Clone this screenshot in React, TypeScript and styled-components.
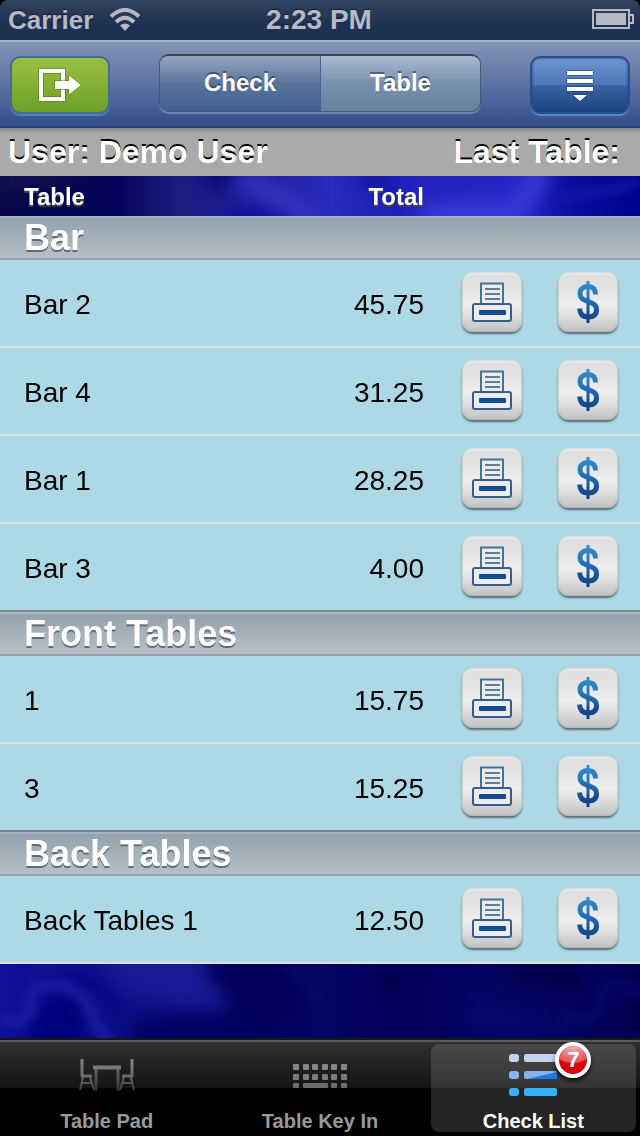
import React from "react";
import styled, { createGlobalStyle, css } from "styled-components";

const Global = createGlobalStyle`
  *, *::before, *::after { box-sizing: border-box; }
  html, body, #root { height: 100%; }
  body { margin: 0; background: #000; font-family: "Liberation Sans", Arial, sans-serif; color: #000; }
  button { font: inherit; border: 0; padding: 0; cursor: pointer; }
`;

const Screen = styled.div`
  min-height: 100%;
  display: flex;
  flex-direction: column;
  border-radius: 8px 8px 0 0;
  overflow: hidden;
`;

const StatusBar = styled.header`
  height: 40px;
  padding: 0 6px 0 8px;
  display: grid;
  grid-template-columns: 1fr auto 1fr;
  align-items: center;
  background: linear-gradient(#34415f, #1f3153 60%, #1e3052);
  color: #b4bac6;
  font-size: 26px;
  line-height: 40px;
  font-weight: bold;
  text-shadow: 0 -1px 1px rgba(0, 0, 0, 0.5);
`;

const Carrier = styled.div`
  display: flex;
  align-items: center;
  gap: 16px;
`;

const Clock = styled.time`
  padding-right: 4px;
  font-size: 28px;
`;

const Battery = styled.svg`
  justify-self: end;
`;

const NavBar = styled.nav`
  height: 88px;
  padding: 14px 10px 12px;
  display: grid;
  grid-template-columns: 1fr 322px 1fr;
  align-items: start;
  background: linear-gradient(#8494b8, #5d72a3 50%, #34508a 98%);
  border-top: 2px solid #a7b3cc;
  border-bottom: 2px solid #2b4069;
`;

const NavButton = styled.button<{ $kind: "exit" | "menu" }>`
  width: 100px;
  height: 58px;
  border-radius: 10px;
  display: grid;
  place-items: center;
  ${(p) =>
    p.$kind === "exit"
      ? css`
          background: linear-gradient(#9bbf3f, #84b033 50%, #6ca02a) padding-box;
          border: 2px solid #44699b;
          box-shadow: 0 2px 0 #4f83bd;
        `
      : css`
          justify-self: end;
          background: linear-gradient(#6f97d4, #4c76b8 50%, #3964a8 51%, #1c427f) padding-box;
          border: 2px solid #29508c;
          box-shadow: 0 2px 0 #5488c0, inset 0 0 3px #1d3f7a;
        `}
`;

const Segments = styled.div`
  height: 58px;
  margin-top: -2px;
  display: grid;
  grid-template-columns: 1fr 1fr;
  border: 1px solid #45587c;
  border-top: 2px solid #3b4455;
  border-radius: 10px;
  overflow: hidden;
  box-shadow: 0 2px 0 rgba(150, 170, 205, 0.55);
`;

const Segment = styled.button<{ $active?: boolean }>`
  padding-bottom: 2px;
  color: #fff;
  font-size: 24px;
  line-height: 28px;
  font-weight: bold;
  text-shadow: 0 -2px 0 rgba(40, 55, 80, 0.65);
  background: ${(p) =>
    p.$active
      ? "linear-gradient(#acbad0, #7890ad 50%, #67819f)"
      : "linear-gradient(#96a6c2, #58749c 50%, #406290)"};
  border-left: ${(p) => (p.$active ? "1px solid #46648f" : "0")};
`;

const UserBar = styled.div`
  height: 48px;
  padding: 0 20px 0 8px;
  display: flex;
  justify-content: space-between;
  background: linear-gradient(#898989, #aaa 6px);
  color: #fff;
  font-size: 32px;
  line-height: 48px;
  font-weight: bold;
  text-shadow: 0 -2px 0 #000;
`;

const Content = styled.main`
  flex: 1;
  position: relative;
  background: #000068;
  padding-bottom: 74px;
`;

const Backdrop = styled.svg`
  position: absolute;
  inset: 0;
  width: 100%;
  height: 100%;
`;

const Checks = styled.table`
  position: relative;
  width: 100%;
  table-layout: fixed;
  border-collapse: separate;
  border-spacing: 0;
`;

const ColumnHead = styled.th<{ $right?: boolean }>`
  height: 40px;
  padding: 2px 20px 0 24px;
  color: #fff;
  font-size: 24px;
  line-height: 28px;
  text-align: ${(p) => (p.$right ? "right" : "left")};
  text-shadow: 0 2px 0 #444;
`;

const SectionHead = styled.th`
  height: 44px;
  padding: 0 24px;
  text-align: left;
  color: #fff;
  font-size: 36px;
  line-height: 40px;
  text-shadow: 0 2px 0 #666b70;
  background: linear-gradient(#93a2ad, #b6bfc8);
  border-top: 2px solid #a9b5be;
  border-bottom: 2px solid #95a0ab;
`;

type CellKind = "name" | "total" | "print" | "pay";

const cellPadding: Record<CellKind, string> = {
  name: "4px 0 0 24px",
  total: "4px 20px 0 0",
  print: "0 0 2px",
  pay: "0 4px 2px 0",
};

const cellAlign: Record<CellKind, string> = {
  name: "left",
  total: "right",
  print: "center",
  pay: "center",
};

const Cell = styled.td<{ $kind: CellKind; $last?: boolean }>`
  height: 88px;
  padding: ${(p) => cellPadding[p.$kind]};
  text-align: ${(p) => cellAlign[p.$kind]};
  vertical-align: middle;
  font-size: 28px;
  line-height: 32px;
  background: #add8e6;
  border-bottom: 2px solid ${(p) => (p.$last ? "#7b8790" : "#e0e0e0")};
`;

const KeyButton = styled.button`
  display: inline-grid;
  place-items: center;
  width: 60px;
  height: 60px;
  vertical-align: middle;
  border-radius: 11px;
  background: linear-gradient(#dedede, #e4e4e4 30%, #efefef 55%, #dcdcdc 75%, #c2c2c2);
  box-shadow: inset 0 0 2px #999, inset 0 2px 2px #f5f5f5, 0 2px 2px rgba(50, 65, 75, 0.7);
`;

const TabBar = styled.footer`
  height: 98px;
  padding: 2px 4px 4px;
  display: grid;
  grid-template-columns: repeat(3, 1fr);
  column-gap: 8px;
  border-top: 2px solid #161616;
  background: linear-gradient(#5a5a5a 2px, #303030 2px, #131313 48px, #000 48px);
`;

const Tab = styled.button<{ $active?: boolean }>`
  margin-top: 2px;
  display: flex;
  flex-direction: column;
  align-items: center;
  justify-content: space-between;
  border-radius: 8px;
  color: ${(p) => (p.$active ? "#fff" : "#999")};
  background: ${(p) =>
    p.$active ? "linear-gradient(#484848, #353535 44px, #242424 44px)" : "transparent"};
  font-size: 20px;
  line-height: 22px;
  font-weight: bold;
`;

const TabIcon = styled.span`
  position: relative;
  height: 62px;
  display: grid;
  place-items: center;
`;

const Badge = styled.span`
  position: absolute;
  top: -2px;
  left: 46px;
  width: 36px;
  height: 36px;
  border: 4px solid #fff;
  border-radius: 50%;
  background: radial-gradient(ellipse 22px 18px at 50% 0, #f4b0b4, #e5545b 90%, #d9000d) padding-box;
  box-shadow: 0 3px 4px rgba(0, 0, 0, 0.7);
  color: #fff;
  font-size: 22px;
  line-height: 28px;
  text-align: center;
`;

const ExitIcon = () => (
  <svg width="44" height="36" viewBox="0 0 44 36" aria-hidden="true">
    <g fill="#fff" stroke="#4d7423" strokeWidth="1" paintOrder="stroke">
      <path fillRule="evenodd" d="M1 2H27V34H1ZM5 6V30H23V6Z" />
      <path d="M17 14H31V8.5L43 18L31 27.500V22H17Z" />
    </g>
  </svg>
);

const MenuIcon = () => (
  <svg width="30" height="34" viewBox="0 0 30 34" aria-hidden="true">
    <path
      d="M2 3H28V7H2ZM2 11H28V15H2ZM2 19H28V23H2ZM8 27H22L15 33Z"
      fill="#fff"
      stroke="#1b3767"
      strokeWidth="1"
      paintOrder="stroke"
    />
  </svg>
);

const PrinterIcon = () => (
  <svg width="40" height="40" viewBox="0 0 40 40" aria-hidden="true">
    <path d="M9 22V1.500H31V22" fill="#ececec" stroke="#3f7598" strokeWidth="2" />
    <path d="M13 7H28M13 12H28M13 17H28" stroke="#5c7d9a" strokeWidth="2" />
    <rect x="1" y="22" width="38" height="17" rx="2" fill="#ececec" stroke="#355c8e" strokeWidth="2" />
    <rect x="7" y="28" width="27" height="5" rx="1" fill="#164a90" />
  </svg>
);

const DollarIcon = () => (
  <svg width="24" height="44" viewBox="0 0 24 44" aria-hidden="true">
    <defs>
      <linearGradient id="dollarInk" gradientUnits="userSpaceOnUse" x1="0" y1="0" x2="0" y2="44">
        <stop offset="0" stopColor="#3390cf" />
        <stop offset="0.4" stopColor="#2775b8" />
        <stop offset="0.75" stopColor="#174d96" />
        <stop offset="1" stopColor="#123d80" />
      </linearGradient>
    </defs>
    <g fill="none" stroke="url(#dollarInk)">
      <path
        d="M19.500 14.500C19.500 9 16.500 6.500 12 6.500C7 6.500 4 9 4 13.500C4 18.500 7.500 19.500 12 21.500C17 23.500 20.500 24.500 20.500 29.500C20.500 35 17 37 12 37C7 37 4 34.500 3.500 28.500"
        strokeWidth="5"
      />
      <path d="M12.010 1L12 43" strokeWidth="3" />
    </g>
  </svg>
);

const TableIcon = () => (
  <svg width="56" height="32" viewBox="0 0 56 32" aria-hidden="true">
    <defs>
      <linearGradient id="chairInk" gradientUnits="userSpaceOnUse" x1="0" y1="0" x2="0" y2="32">
        <stop offset="0" stopColor="#858585" />
        <stop offset="0.6" stopColor="#666" />
        <stop offset="1" stopColor="#3c3c3c" />
      </linearGradient>
    </defs>
    <g fill="none" stroke="url(#chairInk)" strokeWidth="2">
      <path d="M3 0L3.010 18M53 0L53.010 18" strokeWidth="3" />
      <path d="M3 17L13 17.010M43 17L53 17.010" strokeWidth="3" />
      <path d="M4 18L1 31M11 18L15 31M3 24H13M52 18L55 31M45 18L41 31M43 24H53" />
      <path d="M14 8.500L42 8.510" strokeWidth="4" />
      <path d="M17 10L17.010 32M39 10L39.010 32" strokeWidth="3" opacity="0.75" />
    </g>
  </svg>
);

const KeyboardIcon = () => (
  <svg width="54" height="28" viewBox="0 -3 54 28" aria-hidden="true">
    <g fill="#858585">
      {[0, 10, 19, 29, 38, 48].map((x) => (
        <g key={x}>
          <rect x={x} y="0" width="6" height="6" rx="1" />
          <rect x={x} y="10" width="6" height="6" rx="1" fill="#7a7a7a" />
        </g>
      ))}
      <g fill="#6c6c6c">
        <rect x="0" y="19" width="6" height="5" rx="1" />
        <rect x="10" y="19" width="25" height="5" rx="1" />
        <rect x="38" y="19" width="6" height="5" rx="1" />
        <rect x="48" y="19" width="6" height="5" rx="1" />
      </g>
    </g>
  </svg>
);

const ListIcon = () => (
  <svg width="48" height="42" viewBox="0 0 48 42" aria-hidden="true">
    <g fill="#c5d3f2">
      <rect width="10" height="8" rx="3" />
      <rect x="15" width="33" height="8" rx="2" />
    </g>
    <g fill="#83b5ea">
      <rect y="17" width="10" height="8" rx="3" />
      <rect x="15" y="17" width="33" height="8" rx="2" />
      <path d="M18 25L48 18V23Q48 25 46 25Z" fill="#1c79ea" />
    </g>
    <g fill="#35b0f8">
      <rect y="34" width="10" height="8" rx="3" />
      <rect x="15" y="34" width="33" height="8" rx="2" />
    </g>
  </svg>
);

const sections = [
  { name: "Bar", rows: [["Bar 2", "45.75"], ["Bar 4", "31.25"], ["Bar 1", "28.25"], ["Bar 3", "4.00"]] },
  { name: "Front Tables", rows: [["1", "15.75"], ["3", "15.25"]] },
  { name: "Back Tables", rows: [["Back Tables 1", "12.50"]] },
];

const Silk = () => (
  <Backdrop viewBox="0 0 640 862" preserveAspectRatio="none" aria-hidden="true">
    <defs>
      <linearGradient id="silkTop">
        <stop offset="0" stopColor="#070748" />
        <stop offset="0.18" stopColor="#04045a" />
        <stop offset="0.28" stopColor="#1c1c80" />
        <stop offset="0.4" stopColor="#1d1d9c" />
        <stop offset="0.52" stopColor="#2a2abf" />
        <stop offset="0.6" stopColor="#2020b8" />
        <stop offset="0.8" stopColor="#2626c6" />
        <stop offset="0.9" stopColor="#0c0ca0" />
        <stop offset="1" stopColor="#000090" />
      </linearGradient>
      <linearGradient id="silkBottom">
        <stop offset="0" stopColor="#101098" />
        <stop offset="0.25" stopColor="#0c0c84" />
        <stop offset="0.4" stopColor="#00005c" />
        <stop offset="0.5" stopColor="#060664" />
        <stop offset="0.62" stopColor="#00005a" />
        <stop offset="0.8" stopColor="#050562" />
        <stop offset="1" stopColor="#000052" />
      </linearGradient>
      <filter id="soft" x="-20%" y="-60%" width="140%" height="220%" colorInterpolationFilters="sRGB">
        <feGaussianBlur stdDeviation="9" />
      </filter>
      <filter id="fine" x="-20%" y="-60%" width="140%" height="220%" colorInterpolationFilters="sRGB">
        <feGaussianBlur stdDeviation="4" />
      </filter>
    </defs>
    <rect width="640" height="60" fill="url(#silkTop)" />
    <rect y="740" width="640" height="122" fill="url(#silkBottom)" />
    <g filter="url(#soft)">
      <path d="M0 -10H110L0 20Z" fill="#13134e" />
      <path d="M200 -14H236L226 14H210Z" fill="#080872" />
      <path d="M236 -4Q280 0 330 50H290Q270 20 236 14Z" fill="#3434c0" />
      <path d="M220 46Q240 20 290 40V60H220Z" fill="#1010a0" />
      <path d="M350 -14H390V10L370 18Z" fill="#1414a4" />
      <path d="M420 30Q480 20 510 30L530 -10H556L520 50H420Z" fill="#3a3ad8" />
      <path d="M560 -12H640V8L560 14Z" fill="#0a0a98" />
      <path d="M90 770H200Q210 810 240 830Q160 836 120 812Z" fill="#1a1a96" />
      <path d="M40 830Q60 812 80 822L86 880H20Z" fill="#00007a" />
      <path d="M130 846Q190 836 260 850V880H140Z" fill="#000060" />
      <path d="M200 790H280Q310 830 300 840H240Z" fill="#000058" />
      <path d="M500 770H580V812Q530 812 506 800Z" fill="#00004c" />
      <path d="M470 800Q480 830 600 846L560 860H460Z" fill="#06066c" />
    </g>
    <g filter="url(#fine)" fill="none">
      <path d="M0 846Q36 846 30 828Q28 806 60 810Q90 818 94 846L112 870" stroke="#2222a6" strokeWidth="10" opacity="0.7" />
      <path d="M64 798Q100 806 116 830" stroke="#000072" strokeWidth="5" opacity="0.6" />
      <path d="M284 786Q304 796 320 830" stroke="#0c0c70" strokeWidth="7" opacity="0.7" />
      <path d="M384 780V812L420 790" stroke="#00004c" strokeWidth="6" />
      <path d="M560 840Q606 848 600 824Q594 804 640 814" stroke="#0a0a74" strokeWidth="8" opacity="0.7" />
      <path d="M560 22Q600 18 644 6" stroke="#2424b8" strokeWidth="5" opacity="0.6" />
    </g>
  </Backdrop>
);

export default function App() {
  return (
    <>
      <Global />
      <Screen>
        <StatusBar>
          <Carrier>
            <span>Carrier</span>
            <svg width="32" height="24" viewBox="0 0 32 24" aria-label="Wi-Fi">
              <g fill="none" stroke="#b4bac6" strokeWidth="4">
                <path d="M2 8.500Q16 -4.500 30 8.500" />
                <path d="M7 14Q16 5.500 25 14" />
              </g>
              <path d="M11 17.500Q16 13.500 21 17.500L16 23Z" fill="#b4bac6" />
            </svg>
          </Carrier>
          <Clock>2:23 PM</Clock>
          <Battery width="42" height="22" viewBox="0 0 42 22" aria-label="Battery full">
            <path d="M1 1H37V19H1ZM38 6H41V14H38" fill="none" stroke="#b4bac6" strokeWidth="2" />
            <rect x="4" y="4" width="30" height="12" fill="#b4bac6" />
          </Battery>
        </StatusBar>
        <NavBar>
          <NavButton $kind="exit" aria-label="Log out">
            <ExitIcon />
          </NavButton>
          <Segments>
            <Segment>Check</Segment>
            <Segment $active>Table</Segment>
          </Segments>
          <NavButton $kind="menu" aria-label="Menu">
            <MenuIcon />
          </NavButton>
        </NavBar>
        <UserBar>
          <span>User: Demo User</span>
          <span>Last Table:</span>
        </UserBar>
        <Content>
          <Silk />
          <Checks>
            <colgroup>
              <col />
              <col width="200" />
              <col width="96" />
              <col width="100" />
            </colgroup>
            <thead>
              <tr>
                <ColumnHead>Table</ColumnHead>
                <ColumnHead $right>Total</ColumnHead>
                <ColumnHead as="td" colSpan={2} />
              </tr>
            </thead>
            {sections.map((section, s) => (
              <tbody key={section.name}>
                <tr>
                  <SectionHead colSpan={4}>{section.name}</SectionHead>
                </tr>
                {section.rows.map(([name, total], r) => {
                  const last = r === section.rows.length - 1 && s < sections.length - 1;
                  return (
                    <tr key={name}>
                      <Cell $last={last} $kind="name">{name}</Cell>
                      <Cell $last={last} $kind="total">{total}</Cell>
                      <Cell $last={last} $kind="print">
                        <KeyButton aria-label={`Print ${name}`}>
                          <PrinterIcon />
                        </KeyButton>
                      </Cell>
                      <Cell $last={last} $kind="pay">
                        <KeyButton aria-label={`Pay ${name}`}>
                          <DollarIcon />
                        </KeyButton>
                      </Cell>
                    </tr>
                  );
                })}
              </tbody>
            ))}
          </Checks>
        </Content>
        <TabBar>
          <Tab>
            <TabIcon><TableIcon /></TabIcon>
            Table Pad
          </Tab>
          <Tab>
            <TabIcon><KeyboardIcon /></TabIcon>
            Table Key In
          </Tab>
          <Tab $active>
            <TabIcon>
              <ListIcon />
              <Badge>7</Badge>
            </TabIcon>
            Check List
          </Tab>
        </TabBar>
      </Screen>
    </>
  );
}
